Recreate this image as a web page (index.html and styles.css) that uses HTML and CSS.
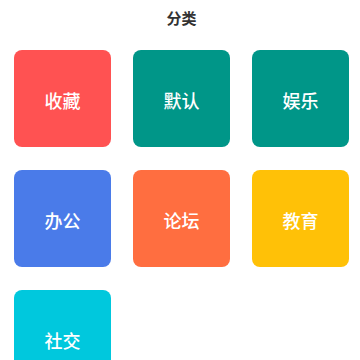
FILE: index.html
```html
<!DOCTYPE html>
<html lang="zh-CN">
<head>
    <meta charset="UTF-8">
    <meta name="viewport" content="width=device-width, initial-scale=1.0">
    <title>分类</title>
    <link rel="stylesheet" href="styles.css">
</head>
<body>
    <div class="page">
        <h1 class="title">分类</h1>

        <!-- Category Grid -->
        <div class="category-grid">
            <div class="category-item cat-favorite">收藏</div>
            <div class="category-item cat-default">默认</div>
            <div class="category-item cat-fun">娱乐</div>
            <div class="category-item cat-office">办公</div>
            <div class="category-item cat-forum">论坛</div>
            <div class="category-item cat-edu">教育</div>
            <div class="category-item cat-social">社交</div>
        </div>
    </div>
</body>
</html>
```

FILE: styles.css
```css
:root {
    --text-color: #333333;
    --red: #ff5252;
    --teal: #009688;
    --blue: #4a7be9;
    --orange: #ff6e40;
    --amber: #ffc107;
    --cyan: #00c8dd;
}

* {
    margin: 0;
    padding: 0;
    box-sizing: border-box;
}

body {
    font-family: 'Noto Sans CJK SC', 'Noto Sans', sans-serif;
    background: #ffffff;
    color: var(--text-color);
}

.page {
    padding: 7px 11px 0 14px;
}

.title {
    text-align: center;
    font-size: 15px;
    font-weight: bold;
    line-height: 22px;
    margin-bottom: 21px;
}

/* Category Grid */
.category-grid {
    display: grid;
    grid-template-columns: repeat(3, 97px);
    column-gap: 22px;
    row-gap: 23px;
}

.category-item {
    height: 97px;
    border-radius: 8px;
    display: flex;
    align-items: center;
    justify-content: center;
    color: white;
    font-size: 18px;
    font-weight: 500;
    padding-top: 2px;
}

.cat-favorite { background: var(--red); }
.cat-default { background: var(--teal); }
.cat-fun { background: var(--teal); }
.cat-office { background: var(--blue); }
.cat-forum { background: var(--orange); }
.cat-edu { background: var(--amber); }
.cat-social { background: var(--cyan); }
```
